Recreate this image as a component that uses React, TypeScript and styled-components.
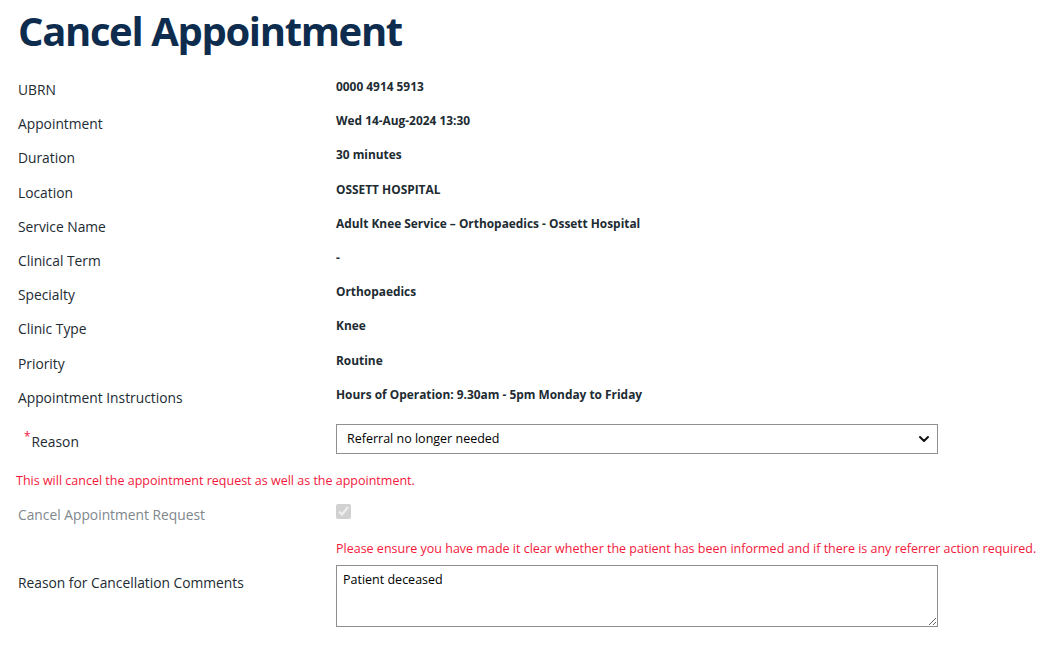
import React from 'react';
import styled, { createGlobalStyle } from 'styled-components';
import { ChevronDown } from 'lucide-react';

const GlobalStyle = createGlobalStyle`
  body {
    margin: 0;
    background: #fff;
    font-family: 'Open Sans', 'Noto Sans', sans-serif;
    color: #212b32;
  }
`;

const Page = styled.div`
  padding: 0 18px;
`;

const Title = styled.h1`
  margin: 0;
  padding: 5px 0 20px;
  font-size: 40px;
  line-height: 52px;
  font-weight: 700;
  color: #0e2d4e;
  letter-spacing: -1.35px;
`;

const Details = styled.dl`
  margin: 0;
  display: grid;
  grid-template-columns: 318px 1fr;
  grid-auto-rows: 34.2px;
`;

const Label = styled.dt<{ $muted?: boolean }>`
  margin: 0;
  padding-top: 4px;
  font-size: 13.8px;
  line-height: 18px;
  color: ${(p) => (p.$muted ? '#80878d' : '#212b32')};
`;

const Value = styled.dd`
  margin: 0;
  font-size: 11.9px;
  line-height: 18px;
  font-weight: 700;
`;

const FormRow = styled.div<{ $top?: number; $alignTop?: boolean }>`
  display: grid;
  grid-template-columns: 318px 602px;
  align-items: ${(p) => (p.$alignTop ? 'start' : 'center')};
  margin-top: ${(p) => p.$top ?? 0}px;
`;

const InlineLabel = styled(Label)`
  padding-top: 2px;
`;

const Required = styled.span`
  color: #f2183b;
  font-size: 12px;
  vertical-align: 6px;
  margin: 0 1px 0 6px;
`;

const SelectWrap = styled.div`
  position: relative;
  height: 30px;
`;

const Select = styled.select`
  appearance: none;
  width: 100%;
  height: 30px;
  box-sizing: border-box;
  border: 1px solid #8f8f8f;
  border-radius: 0;
  background: #fff;
  padding: 0 30px 0 10px;
  font-family: 'Open Sans', 'Noto Sans', sans-serif;
  font-size: 12.5px;
  color: #000;
`;

const Chevron = styled(ChevronDown)`
  position: absolute;
  right: 6px;
  top: 7px;
  pointer-events: none;
`;

const Warning = styled.p<{ $indent?: number; $top?: number }>`
  margin: ${(p) => p.$top ?? 0}px 0 0;
  font-size: 12.5px;
  line-height: 18px;
  color: #f2183b;
  padding-left: ${(p) => p.$indent ?? 0}px;
`;

const Check = styled.input`
  margin: 0;
  width: 15px;
  height: 15px;
`;

const Comments = styled.textarea`
  width: 602px;
  height: 62px;
  box-sizing: border-box;
  border: 1px solid #8f8f8f;
  border-radius: 0;
  padding: 5px 6px;
  font-family: 'Open Sans', 'Noto Sans', sans-serif;
  font-size: 12.5px;
  color: #000;
`;

const CommentsLabel = styled(Label)`
  padding-top: 9px;
`;

const rows: [string, string][] = [
  ['UBRN', '0000 4914 5913'],
  ['Appointment', 'Wed 14-Aug-2024 13:30'],
  ['Duration', '30 minutes'],
  ['Location', 'OSSETT HOSPITAL'],
  ['Service Name', 'Adult Knee Service \u2013 Orthopaedics - Ossett Hospital'],
  ['Clinical Term', '-'],
  ['Specialty', 'Orthopaedics'],
  ['Clinic Type', 'Knee'],
  ['Priority', 'Routine'],
  ['Appointment Instructions', 'Hours of Operation: 9.30am - 5pm Monday to Friday'],
];

export default function App() {
  return (
    <Page>
      <GlobalStyle />
      <Title>Cancel Appointment</Title>
      <Details>
        {rows.map(([label, value]) => (
          <React.Fragment key={label}>
            <Label>{label}</Label>
            <Value>{value}</Value>
          </React.Fragment>
        ))}
      </Details>
      <FormRow $top={5}>
        <InlineLabel>
          <Required>*</Required>Reason
        </InlineLabel>
        <SelectWrap>
          <Select defaultValue="none">
            <option value="none">Referral no longer needed</option>
          </Select>
          <Chevron size={16} strokeWidth={3} color="#111" />
        </SelectWrap>
      </FormRow>
      <Warning $indent={0} $top={18} style={{ marginLeft: -2 }}>
        This will cancel the appointment request as well as the appointment.
      </Warning>
      <FormRow $top={12}>
        <Label $muted>Cancel Appointment Request</Label>
        <div>
          <Check type="checkbox" checked disabled readOnly />
        </div>
      </FormRow>
      <Warning $indent={318} $top={16}>
        Please ensure you have made it clear whether the patient has been informed and if there is any referrer action required.
      </Warning>
      <FormRow $top={7} $alignTop>
        <CommentsLabel>Reason for Cancellation Comments</CommentsLabel>
        <Comments defaultValue="Patient deceased" />
      </FormRow>
    </Page>
  );
}
